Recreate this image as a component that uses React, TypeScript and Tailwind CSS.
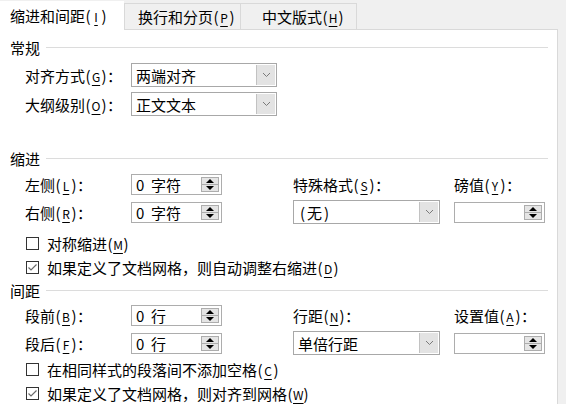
import type { ReactNode } from 'react';

// half-width mnemonic like (G) with underlined letter
function Mn({ k }: { k: string }) {
  return (
    <span className="inline-flex flex-none items-baseline">
      <span className="inline-block w-[6px] text-center">(</span>
      <span className="inline-block w-[10px] text-center text-[12px] underline underline-offset-[3px] decoration-1">{k}</span>
      <span className="inline-block w-[6px] text-center">)</span>
    </span>
  );
}

function SectionHeader({ children }: { children: ReactNode }) {
  return (
    <div className="flex items-center h-[20px] pl-[10px] pr-[9px]">
      <span className="leading-none">{children}</span>
      <div className="flex-1 h-px bg-[#dcdcdc] ml-[6px]" />
    </div>
  );
}

function Chevron() {
  return (
    <svg width="9" height="6" viewBox="0 0 9 6">
      <polyline points="1,1 4.5,4.5 8,1" fill="none" stroke="#7a7a7a" strokeWidth="1" />
    </svg>
  );
}

function Select({ value, className }: { value: ReactNode; className: string }) {
  return (
    <div className={`flex h-[24px] border border-[#a8a8a8] bg-white ${className}`}>
      <div className="flex-1 flex items-center pl-[4px] leading-none">{value}</div>
      <div className="w-[19px] my-px mr-px bg-[#e3e3e3] border-l border-[#c2c2c2] flex items-center justify-center">
        <Chevron />
      </div>
    </div>
  );
}

function Spin({ value }: { value?: ReactNode }) {
  return (
    <div className="flex h-[21px] w-[91px] border border-[#adadad] bg-white">
      <div className="flex-1 flex items-center pl-[4px] leading-none">{value}</div>
      <div className="w-[18px] my-[2px] mr-[2px] flex flex-col border border-[#adadad] bg-[#e5e5e5]">
        <div className="flex-1 flex items-center justify-center border-b border-[#adadad]">
          <svg width="8" height="4" viewBox="0 0 8 4">
            <polygon points="4,0 8,4 0,4" fill="#000" />
          </svg>
        </div>
        <div className="flex-1 flex items-center justify-center">
          <svg width="8" height="4" viewBox="0 0 8 4">
            <polygon points="0,0 8,0 4,4" fill="#000" />
          </svg>
        </div>
      </div>
    </div>
  );
}

function Check({ checked, children, className = '' }: { checked?: boolean; children: ReactNode; className?: string }) {
  return (
    <div className={`flex items-center h-[24px] pl-[26px] ${className}`}>
      <div className="w-[13px] h-[13px] flex-none border border-[#333] bg-white flex items-center justify-center">
        {checked && (
          <svg width="11" height="9" viewBox="0 0 11 9">
            <polyline points="1.5,4.5 4,7 9.5,1.5" fill="none" stroke="#6a6a6a" strokeWidth="1.2" />
          </svg>
        )}
      </div>
      <span className="ml-[8px] leading-none whitespace-nowrap">{children}</span>
    </div>
  );
}

function Row({ a, b, c, d, className = '' }: { a: ReactNode; b: ReactNode; c?: ReactNode; d?: ReactNode; className?: string }) {
  return (
    <div className={`flex items-center h-[24px] pl-[25px] ${className}`}>
      <div className="w-[106px] flex-none leading-none whitespace-nowrap">{a}</div>
      <div className="w-[91px] flex-none">{b}</div>
      <div className="w-[147px] flex-none ml-[71px] leading-none whitespace-nowrap">{c}</div>
      <div className="w-[92px] flex-none ml-[14px] leading-none whitespace-nowrap">{d}</div>
    </div>
  );
}

const zero = (unit: string) => (
  <span className="inline-flex">
    <span className="inline-block w-[15px]">0</span>
    {unit}
  </span>
);

export default function App() {
  return (
    <div className="w-[566px] h-[404px] bg-[#f0f0f0] overflow-hidden text-[15px] text-black font-['Noto_Sans_CJK_SC','Noto_Sans',sans-serif]">
      {/* Tabs */}
      <div className="flex h-[29px]">
        <div className="w-[124px] mt-px h-[29px] bg-white pl-[10px] flex items-center leading-none whitespace-nowrap relative z-10">
          缩进和间距<Mn k="I" />
        </div>
        <div className="w-[116px] mt-[3px] h-[26px] border-t border-l border-[#d9d9d9] pl-[13px] flex items-center leading-none whitespace-nowrap">
          换行和分页<Mn k="P" />
        </div>
        <div className="w-[117px] mt-[3px] h-[26px] border-t border-l border-r border-[#d9d9d9] pl-[21px] flex items-center leading-none whitespace-nowrap">
          中文版式<Mn k="H" />
        </div>
      </div>

      {/* Panel */}
      <div className="w-[558px] h-[375px] bg-white border-t border-r border-[#d9d9d9]">
        <div className="mt-[7px]">
          <SectionHeader>常规</SectionHeader>
        </div>
        <div className="flex items-center h-[24px] pl-[25px] mt-[6px]">
          <div className="w-[106px] leading-none whitespace-nowrap">
            对齐方式<Mn k="G" />：
          </div>
          <Select value="两端对齐" className="w-[146px]" />
        </div>
        <div className="flex items-center h-[24px] pl-[25px] mt-[5px]">
          <div className="w-[106px] leading-none whitespace-nowrap">
            大纲级别<Mn k="O" />：
          </div>
          <Select value="正文文本" className="w-[146px]" />
        </div>

        <div className="mt-[32px]">
          <SectionHeader>缩进</SectionHeader>
        </div>
        <Row
          className="mt-[4px]"
          a={<>左侧<Mn k="L" />：</>}
          b={<Spin value={zero('字符')} />}
          c={<>特殊格式<Mn k="S" />：</>}
          d={<>磅值<Mn k="Y" />：</>}
        />
        <Row
          className="mt-[4px]"
          a={<>右侧<Mn k="R" />：</>}
          b={<Spin value={zero('字符')} />}
          c={
            <Select
              value={
                <span className="inline-flex">
                  <span className="inline-block w-[9px] text-center">(</span>无<span className="inline-block w-[9px] text-center">)</span>
                </span>
              }
              className="w-[147px]"
            />
          }
          d={<Spin />}
        />
        <Check className="mt-[7px]">
          对称缩进<Mn k="M" />
        </Check>
        <Check checked>
          如果定义了文档网格，则自动调整右缩进<Mn k="D" />
        </Check>

        <div className="mt-px">
          <SectionHeader>间距</SectionHeader>
        </div>
        <Row
          className="mt-[3px]"
          a={<>段前<Mn k="B" />：</>}
          b={<Spin value={zero('行')} />}
          c={<>行距<Mn k="N" />：</>}
          d={<>设置值<Mn k="A" />：</>}
        />
        <Row
          className="mt-[4px]"
          a={<>段后<Mn k="F" />：</>}
          b={<Spin value={zero('行')} />}
          c={<Select value="单倍行距" className="w-[147px]" />}
          d={<Spin />}
        />
        <Check className="mt-[2px]">
          在相同样式的段落间不添加空格<Mn k="C" />
        </Check>
        <Check checked>
          如果定义了文档网格，则对齐到网格<Mn k="W" />
        </Check>
      </div>
    </div>
  );
}
